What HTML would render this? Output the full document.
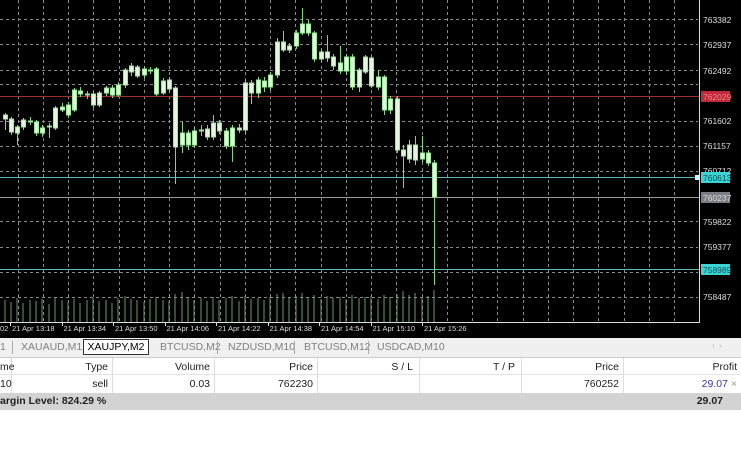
<!DOCTYPE html>
<html><head><style>
*{margin:0;padding:0;box-sizing:border-box}
body{width:741px;height:470px;overflow:hidden;background:#fff;font-family:"Liberation Sans",sans-serif;position:relative}
#chart{position:absolute;left:0;top:0;width:741px;height:338px;background:#000}
.tabs{position:absolute;left:0;top:338px;width:741px;height:19px;background:#f0f0f0;font-size:10.5px;color:#808080}
.tabs span{position:absolute;top:3px;white-space:nowrap}
.sep{position:absolute;top:3px;width:1px;height:13px;background:#aaa}
.act{position:absolute;left:83px;top:1px;width:66px;height:16px;background:#fff;border:1px solid #333;color:#000;font-size:10.5px;text-align:center;line-height:14px}
.row{position:absolute;left:0;width:741px;height:18px;font-size:10.5px;color:#222}
.row div{position:absolute;top:0;height:18px;line-height:18px;text-align:right;padding-right:4px;border-right:1px solid #ddd}
</style></head><body>
<svg id="chart" width="741" height="338" xmlns="http://www.w3.org/2000/svg">
<g stroke="#8a8a8a" stroke-width="1" stroke-dasharray="3,3">
<line x1="0" y1="19.5" x2="698" y2="19.5"/><line x1="0" y1="44.5" x2="698" y2="44.5"/><line x1="0" y1="70.5" x2="698" y2="70.5"/><line x1="0" y1="84.5" x2="698" y2="84.5"/><line x1="0" y1="121.5" x2="698" y2="121.5"/><line x1="0" y1="146.5" x2="698" y2="146.5"/><line x1="0" y1="171.5" x2="698" y2="171.5"/><line x1="0" y1="221.5" x2="698" y2="221.5"/><line x1="0" y1="247.5" x2="698" y2="247.5"/><line x1="0" y1="272.5" x2="698" y2="272.5"/><line x1="0" y1="297.5" x2="698" y2="297.5"/>
<line x1="18.5" y1="0" x2="18.5" y2="322"/><line x1="43.5" y1="0" x2="43.5" y2="322"/><line x1="68.5" y1="0" x2="68.5" y2="322"/><line x1="93.5" y1="0" x2="93.5" y2="322"/><line x1="119.5" y1="0" x2="119.5" y2="322"/><line x1="144.5" y1="0" x2="144.5" y2="322"/><line x1="169.5" y1="0" x2="169.5" y2="322"/><line x1="194.5" y1="0" x2="194.5" y2="322"/><line x1="220.5" y1="0" x2="220.5" y2="322"/><line x1="245.5" y1="0" x2="245.5" y2="322"/><line x1="270.5" y1="0" x2="270.5" y2="322"/><line x1="295.5" y1="0" x2="295.5" y2="322"/><line x1="321.5" y1="0" x2="321.5" y2="322"/><line x1="346.5" y1="0" x2="346.5" y2="322"/><line x1="371.5" y1="0" x2="371.5" y2="322"/><line x1="396.5" y1="0" x2="396.5" y2="322"/><line x1="422.5" y1="0" x2="422.5" y2="322"/><line x1="447.5" y1="0" x2="447.5" y2="322"/><line x1="472.5" y1="0" x2="472.5" y2="322"/><line x1="497.5" y1="0" x2="497.5" y2="322"/><line x1="523.5" y1="0" x2="523.5" y2="322"/><line x1="548.5" y1="0" x2="548.5" y2="322"/><line x1="573.5" y1="0" x2="573.5" y2="322"/><line x1="598.5" y1="0" x2="598.5" y2="322"/><line x1="624.5" y1="0" x2="624.5" y2="322"/><line x1="649.5" y1="0" x2="649.5" y2="322"/><line x1="674.5" y1="0" x2="674.5" y2="322"/>
</g>
<line x1="0" y1="96.5" x2="699" y2="96.5" stroke="#a03030"/>
<line x1="0" y1="177.5" x2="699" y2="177.5" stroke="#5fb8b8"/>
<line x1="0" y1="197.5" x2="699" y2="197.5" stroke="#9a9a9a"/>
<line x1="0" y1="269.5" x2="699" y2="269.5" stroke="#5fb8b8"/>
<g stroke="#6a9a6a" stroke-width="1">
<path d="M5 300V322M11 302V322M17 298V322M23 303V322M30 300V322M36 301V322M42 299V322M49 304V322M55 297V322M62 300V322M68 302V322M74 299V322M80 303V322M87 300V322M93 298V322M99 301V322M106 300V322M112 303V322M118 298V322M125 296V322M131 299V322M137 300V322M144 302V322M150 299V322M156 297V322M163 300V322M169 301V322M175 294V322M182 292V322M188 298V322M194 300V322M201 298V322M207 301V322M213 297V322M219 300V322M226 298V322M232 296V322M239 301V322M245 296V322M251 299V322M258 298V322M264 300V322M270 297V322M277 294V322M283 293V322M289 298V322M296 296V322M302 293V322M308 297V322M314 295V322M321 299V322M327 296V322M333 298V322M340 297V322M346 299V322M352 295V322M359 298V322M365 297V322M371 296V322M378 299V322M384 295V322M390 297V322M397 294V322M403 291V322M409 295V322M415 293V322M422 297V322M428 296V322M434 290V322"/>
</g>
<g stroke="#7fd67f" stroke-width="1">
<path d="M5.5 113V130M11.5 117V135M17.5 125V145M23.5 118V130M30.5 117V125M36.5 120V136M42.5 125V137M49.5 123V138M55.5 106V130M62.5 103V112M68.5 102V118M74.5 88V112M80.5 87V97M87.5 91V99M93.5 91V108M99.5 91V107M106.5 86V96M112.5 85V98M118.5 82V97M125.5 68V88M131.5 63V76M137.5 65V78M144.5 66V78M150.5 67V74M156.5 67V96M163.5 78V95M169.5 77V93M175.5 86V184M182.5 122V153M188.5 130V150M194.5 127V148M201.5 125V136M207.5 125V140M213.5 115V140M219.5 120V134M226.5 128V149M232.5 125V162M239.5 124V133M245.5 80V134M251.5 80V104M258.5 77V98M264.5 77V92M270.5 72V90M277.5 38V78M283.5 31V52M289.5 43V53M296.5 30V49M302.5 8V35M308.5 20V36M314.5 31V62M321.5 49V62M327.5 35V62M333.5 54V70M340.5 46V74M346.5 54V75M352.5 54V90M359.5 68V92M365.5 55V74M371.5 56V88M378.5 70V90M384.5 75V115M390.5 96V114M397.5 96V153M403.5 145V188M409.5 140V163M415.5 136V165M422.5 136V162M428.5 150V166M434.5 160V285"/>
</g>
<g fill="#e2f8da" stroke="#9fe69f" stroke-width="1">
<rect x="3.5" y="115" width="4" height="4"/><rect x="9.5" y="119" width="4" height="13"/><rect x="15.5" y="127" width="4" height="6"/><rect x="21.5" y="120" width="4" height="7"/><rect x="28.5" y="121" width="4" height="1"/><rect x="34.5" y="122" width="4" height="11"/><rect x="40.5" y="128" width="4" height="5"/><rect x="47.5" y="126" width="4" height="1"/><rect x="53.5" y="108" width="4" height="20"/><rect x="60.5" y="107" width="4" height="3"/><rect x="66.5" y="105" width="4" height="10"/><rect x="72.5" y="90" width="4" height="20"/><rect x="78.5" y="91" width="4" height="3"/><rect x="85.5" y="94" width="4" height="1"/><rect x="91.5" y="94" width="4" height="11"/><rect x="97.5" y="93" width="4" height="12"/><rect x="104.5" y="88" width="4" height="5"/><rect x="110.5" y="88" width="4" height="7"/><rect x="116.5" y="85" width="4" height="10"/><rect x="123.5" y="70" width="4" height="15"/><rect x="129.5" y="66" width="4" height="6"/><rect x="135.5" y="67" width="4" height="9"/><rect x="142.5" y="69" width="4" height="6"/><rect x="148.5" y="70" width="4" height="1"/><rect x="154.5" y="69" width="4" height="25"/><rect x="161.5" y="81" width="4" height="12"/><rect x="167.5" y="80" width="4" height="9"/><rect x="173.5" y="88" width="4" height="59"/><rect x="180.5" y="133" width="4" height="12"/><rect x="186.5" y="133" width="4" height="12"/><rect x="192.5" y="131" width="4" height="14"/><rect x="199.5" y="130" width="4" height="1"/><rect x="205.5" y="129" width="4" height="8"/><rect x="211.5" y="123" width="4" height="14"/><rect x="217.5" y="123" width="4" height="8"/><rect x="224.5" y="131" width="4" height="15"/><rect x="230.5" y="128" width="4" height="18"/><rect x="237.5" y="128" width="4" height="2"/><rect x="243.5" y="83" width="4" height="47"/><rect x="249.5" y="83" width="4" height="10"/><rect x="256.5" y="80" width="4" height="13"/><rect x="262.5" y="81" width="4" height="6"/><rect x="268.5" y="75" width="4" height="12"/><rect x="275.5" y="42" width="4" height="33"/><rect x="281.5" y="42" width="4" height="8"/><rect x="287.5" y="46" width="4" height="4"/><rect x="294.5" y="33" width="4" height="13"/><rect x="300.5" y="24" width="4" height="9"/><rect x="306.5" y="24" width="4" height="9"/><rect x="312.5" y="33" width="4" height="26"/><rect x="319.5" y="52" width="4" height="7"/><rect x="325.5" y="52" width="4" height="6"/><rect x="331.5" y="57" width="4" height="9"/><rect x="338.5" y="63" width="4" height="8"/><rect x="344.5" y="57" width="4" height="14"/><rect x="350.5" y="57" width="4" height="30"/><rect x="357.5" y="70" width="4" height="17"/><rect x="363.5" y="57" width="4" height="15"/><rect x="369.5" y="58" width="4" height="28"/><rect x="376.5" y="77" width="4" height="10"/><rect x="382.5" y="77" width="4" height="33"/><rect x="388.5" y="99" width="4" height="11"/><rect x="395.5" y="99" width="4" height="51"/><rect x="401.5" y="150" width="4" height="6"/><rect x="407.5" y="145" width="4" height="14"/><rect x="413.5" y="145" width="4" height="15"/><rect x="420.5" y="153" width="4" height="6"/><rect x="426.5" y="153" width="4" height="10"/><rect x="432.5" y="163" width="4" height="34"/>
</g>
<line x1="0" y1="322.5" x2="699" y2="322.5" stroke="#ddd"/>
<line x1="699.5" y1="0" x2="699.5" y2="323" stroke="#ddd"/>
<g fill="#ddd" font-family="Liberation Sans, sans-serif" font-size="8.5">
<text x="703" y="23">763382</text><text x="703" y="48">762937</text><text x="703" y="74">762492</text><text x="703" y="124">761602</text><text x="703" y="149">761157</text><text x="703" y="174">760712</text><text x="703" y="225">759822</text><text x="703" y="250">759377</text><text x="703" y="300">758487</text>
<rect x="701" y="91" width="29" height="11" fill="#c02a3a"/><text x="703" y="100" fill="#f08090">762029</text>
<rect x="701" y="172" width="29" height="11" fill="#3ad4d4"/><text x="703" y="181" fill="#105050">760613</text>
<rect x="701" y="192" width="29" height="11" fill="#7a7f86"/><text x="703" y="201" fill="#d8d8d8">760237</text>
<rect x="701" y="264" width="29" height="11" fill="#3ad4d4"/><text x="703" y="273" fill="#105050">758989</text>
<rect x="695" y="175" width="5" height="5" fill="#bff"/>
</g>
<g fill="#ddd" font-family="Liberation Sans, sans-serif" font-size="7.5">
<text x="0" y="331">02</text><text x="12" y="331">21 Apr 13:18</text><text x="63.5" y="331">21 Apr 13:34</text><text x="115" y="331">21 Apr 13:50</text><text x="166.5" y="331">21 Apr 14:06</text><text x="218" y="331">21 Apr 14:22</text><text x="269.5" y="331">21 Apr 14:38</text><text x="321" y="331">21 Apr 14:54</text><text x="372.5" y="331">21 Apr 15:10</text><text x="424" y="331">21 Apr 15:26</text>
</g>
<g stroke="#ddd"><path d="M10.5 322v4M62.5 322v4M113.5 322v4M165.5 322v4M216.5 322v4M268.5 322v4M319.5 322v4M371.5 322v4M422.5 322v4"/></g>
</svg>
<div class="tabs">
<span style="left:0">1</span><div class="sep" style="left:12px"></div>
<span style="left:21px">XAUAUD,M1</span>
<div class="act">XAUJPY,M2</div>
<span style="left:160px">BTCUSD,M2</span><div class="sep" style="left:217px"></div>
<span style="left:228px">NZDUSD,M10</span><div class="sep" style="left:294px"></div>
<span style="left:304px">BTCUSD,M12</span><div class="sep" style="left:368px"></div>
<span style="left:377px">USDCAD,M10</span>
<span style="left:712px;font-size:8px;color:#bbb">‹ &nbsp;›</span>
</div>
<div class="row" style="top:357px;border-top:1px solid #ccc;border-bottom:1px solid #e4e4e4">
<div style="left:0;width:12px">me</div><div style="left:12px;width:101px">Type</div><div style="left:113px;width:102px">Volume</div><div style="left:215px;width:103px">Price</div><div style="left:318px;width:102px;padding-right:6px">S / L</div><div style="left:420px;width:102px;padding-right:6px">T / P</div><div style="left:522px;width:102px">Price</div><div style="left:624px;width:117px;border:none">Profit</div>
</div>
<div class="row" style="top:375px">
<div style="left:0;width:12px">10</div><div style="left:12px;width:101px">sell</div><div style="left:113px;width:102px">0.03</div><div style="left:215px;width:103px">762230</div><div style="left:318px;width:102px"></div><div style="left:420px;width:102px"></div><div style="left:522px;width:102px">760252</div><div style="left:624px;width:117px;border:none;color:#3a3aa0">29.07 <span style="color:#999">×</span></div>
</div>
<div class="row" style="top:393px;height:17px;background:#d3d3d3;font-weight:bold;line-height:17px">
<span style="position:absolute;left:0;top:0">argin Level: 824.29 %</span>
<span style="position:absolute;right:18px;top:0">29.07</span>
</div>
</body></html>
